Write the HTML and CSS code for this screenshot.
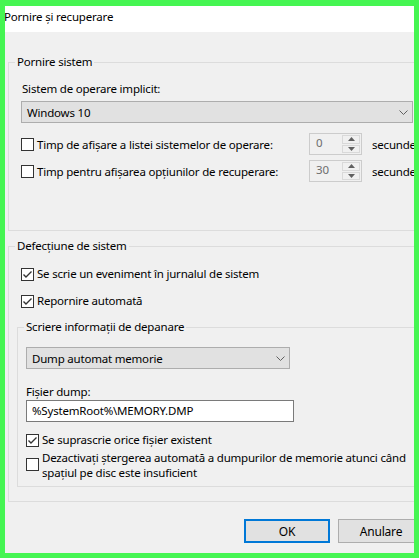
FILE: index.html
```html
<!DOCTYPE html>
<html lang="ro">
<head>
<meta charset="utf-8">
<title>Pornire și recuperare</title>
<link rel="stylesheet" href="styles.css">
</head>
<body>
<div class="window">
  <div class="titlebar">Pornire și recuperare</div>
  <div class="content">
    <fieldset class="group g1">
      <legend>Pornire sistem</legend>
      <div class="body b1">
        <div class="label l1">Sistem de operare implicit:</div>
        <div class="select wide">
          <span>Windows 10</span>
          <svg class="chev" width="9" height="5" viewBox="0 0 9 5"><polyline points="0.5,0.5 4.5,4.5 8.5,0.5" fill="none" stroke="#606060" stroke-width="1"/></svg>
        </div>
        <div class="timerow r1">
          <label class="cb"><span class="box"></span><span>Timp de afișare a listei sistemelor de operare:</span></label>
          <div class="spin"><span class="val">0</span><span class="btns"><span class="up"><svg width="7" height="4" viewBox="0 0 7 4"><polygon points="0,4 3.5,0 7,4" fill="#606060"/></svg></span><span class="dn"><svg width="7" height="4" viewBox="0 0 7 4"><polygon points="0,0 3.5,4 7,0" fill="#606060"/></svg></span></span></div>
          <span class="unit">secunde</span>
        </div>
        <div class="timerow r2">
          <label class="cb"><span class="box"></span><span>Timp pentru afișarea opțiunilor de recuperare:</span></label>
          <div class="spin"><span class="val">30</span><span class="btns"><span class="up"><svg width="7" height="4" viewBox="0 0 7 4"><polygon points="0,4 3.5,0 7,4" fill="#606060"/></svg></span><span class="dn"><svg width="7" height="4" viewBox="0 0 7 4"><polygon points="0,0 3.5,4 7,0" fill="#606060"/></svg></span></span></div>
          <span class="unit">secunde</span>
        </div>
      </div>
    </fieldset>

    <fieldset class="group g2">
      <legend>Defecțiune de sistem</legend>
      <div class="body b2">
        <label class="cb row c1"><span class="box"><svg width="11" height="11" viewBox="0 0 11 11"><polyline points="1.5,5.5 4,8 9.5,2.5" fill="none" stroke="#333" stroke-width="1.4"/></svg></span><span>Se scrie un eveniment în jurnalul de sistem</span></label>
        <label class="cb row c2"><span class="box"><svg width="11" height="11" viewBox="0 0 11 11"><polyline points="1.5,5.5 4,8 9.5,2.5" fill="none" stroke="#333" stroke-width="1.4"/></svg></span><span>Repornire automată</span></label>
        <fieldset class="group g3">
          <legend>Scriere informații de depanare</legend>
          <div class="body b3">
            <div class="select narrow">
              <span>Dump automat memorie</span>
              <svg class="chev" width="9" height="5" viewBox="0 0 9 5"><polyline points="0.5,0.5 4.5,4.5 8.5,0.5" fill="none" stroke="#606060" stroke-width="1"/></svg>
            </div>
            <div class="label l2">Fișier dump:</div>
            <div class="input">%SystemRoot%\MEMORY.DMP</div>
            <label class="cb row c3"><span class="box"><svg width="11" height="11" viewBox="0 0 11 11"><polyline points="1.5,5.5 4,8 9.5,2.5" fill="none" stroke="#333" stroke-width="1.4"/></svg></span><span>Se suprascrie orice fișier existent</span></label>
            <label class="cb multi c4"><span class="box"></span><span class="mtext">Dezactivați ștergerea automată a dumpurilor de memorie atunci când spațiul pe disc este insuficient</span></label>
          </div>
        </fieldset>
      </div>
    </fieldset>

    <div class="buttons">
      <button class="btn ok">OK</button>
      <button class="btn">Anulare</button>
    </div>
  </div>
</div>
</body>
</html>
```

FILE: styles.css
```css
html, body {
  margin: 0;
  padding: 0;
}
body {
  background: #45f552;
  padding: 6px 5px 5px 5px;
  font-family: "Noto Sans", "Segoe UI", sans-serif;
  font-size: 11.5px;
  letter-spacing: -0.2px;
  color: #000;
}
.window {
  width: 409px;
  height: 547px;
  overflow: hidden;
  background: #f0f0f0;
  display: flex;
  flex-direction: column;
}
.titlebar {
  height: 26px;
  background: #fff;
  line-height: 16px;
  padding-top: 3px;
  box-sizing: border-box;
  text-indent: -1px;
  white-space: nowrap;
}
.content {
  width: 460px;
  padding-left: 3px;
  display: flex;
  flex-direction: column;
}
.group {
  margin: 0;
  padding: 0;
  border: 1px solid #dcdcdc;
  min-width: 0;
}
.group > legend {
  margin-left: 6px;
  padding: 0 2px;
  line-height: 14px;
  height: 14px;
}
.g1 {
  margin-top: 23px;
}
.body {
  display: flex;
  flex-direction: column;
  align-items: flex-start;
}
.b1 {
  padding: 12px 0 48px 12px;
}
.label {
  line-height: 16px;
  height: 16px;
  margin-left: 1px;
}
.select {
  box-sizing: border-box;
  height: 22px;
  background: #e1e1e1;
  border: 1px solid #adadad;
  display: flex;
  align-items: center;
  justify-content: space-between;
  padding: 0 4px 0 5px;
}
.wide {
  width: 392px;
  margin-top: 4px;
}
.chev {
  display: block;
}
.timerow {
  display: grid;
  grid-template-columns: 288px 53px auto;
  align-items: center;
  height: 22px;
}
.r1 { margin-top: 10px; }
.r2 { margin-top: 5px; }
.cb {
  display: flex;
  align-items: center;
  gap: 3px;
  white-space: nowrap;
}
.box {
  width: 13px;
  height: 13px;
  box-sizing: border-box;
  border: 1px solid #333;
  background: #fff;
  display: flex;
  align-items: center;
  justify-content: center;
  flex: none;
}
.box svg { display: block; }
.spin {
  box-sizing: border-box;
  height: 22px;
  border: 1px solid #cccccc;
  background: #f0f0f0;
  display: flex;
  justify-content: space-between;
}
.val {
  color: #6d6d6d;
  padding-left: 6px;
  line-height: 18px;
}
.btns {
  width: 18px;
  display: flex;
  flex-direction: column;
  padding: 1px 1px 1px 0;
  gap: 1px;
}
.btns span {
  flex: 1;
  border: 1px solid #d9d9d9;
  display: flex;
  align-items: center;
  justify-content: center;
}
.btns svg { display: block; }
.unit {
  margin-left: 10px;
  white-space: nowrap;
}
.g2 {
  margin-top: 8px;
}
.b2 {
  padding: 13px 0 14px 12px;
}
.row {
  height: 16px;
  line-height: 16px;
}
.c2 { margin-top: 11px; }
.g3 {
  margin-top: 11px;
  margin-left: -4px;
  width: 440px;
}
.b3 {
  padding: 13px 0 6px 8px;
}
.narrow {
  width: 264px;
}
.l2 {
  margin-top: 15px;
  margin-left: 0;
}
.input {
  box-sizing: border-box;
  width: 268px;
  height: 22px;
  border: 1px solid #7a7a7a;
  background: #fff;
  padding-left: 5px;
  line-height: 20px;
}
.c3 { margin-top: 10px; }
.multi {
  align-items: flex-start;
  margin-top: 2px;
  white-space: normal;
}
.multi .box {
  margin-top: 8px;
}
.mtext {
  width: 372px;
  line-height: 15px;
}
.buttons {
  display: flex;
  gap: 8px;
  padding-left: 236px;
  margin-top: 17px;
}
.btn {
  width: 86px;
  height: 24px;
  box-sizing: border-box;
  background: #e1e1e1;
  border: 1px solid #adadad;
  font-family: inherit;
  font-size: 12px;
  letter-spacing: -0.2px;
  color: #000;
  padding: 0;
  flex: none;
}
.btn.ok {
  border: 2px solid #0078d7;
}
```
